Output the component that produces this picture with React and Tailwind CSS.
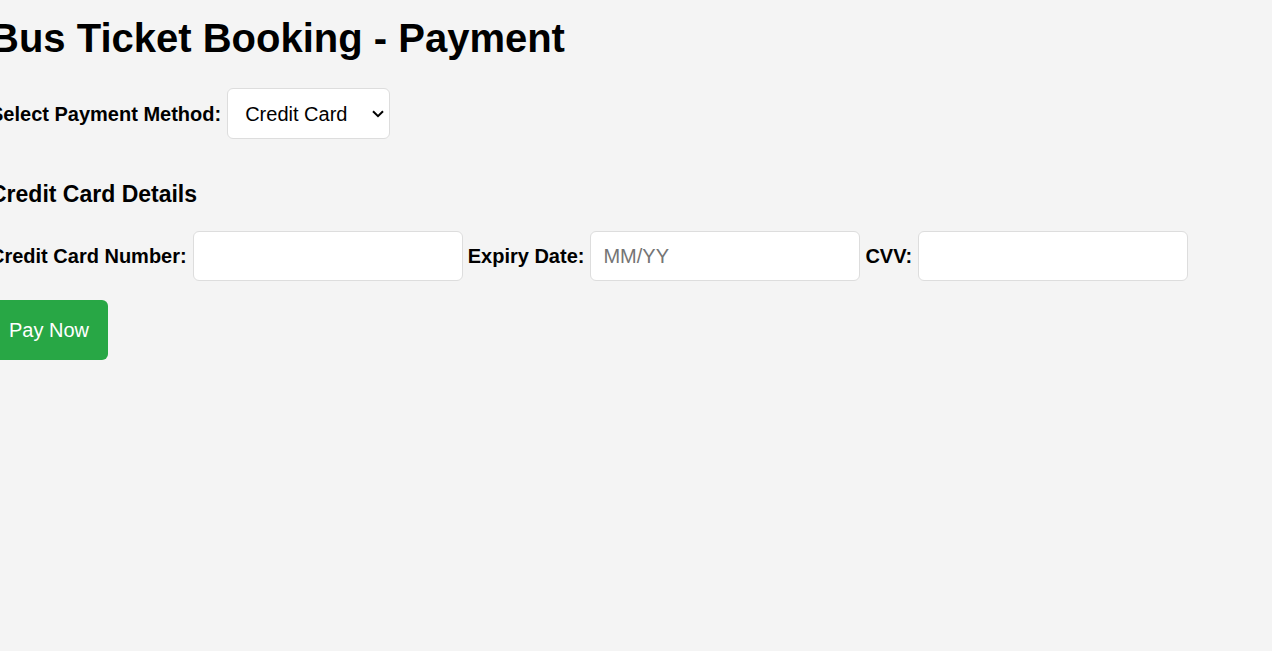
import React, { useState } from "react";

const field =
  "rounded-md border border-[#dddddd] bg-white text-[20px] text-black placeholder:text-[#757575]";
const label = "text-[20px] font-bold whitespace-nowrap";

function Field({ id, text, placeholder }) {
  return (
    <div className="flex items-center gap-1.5">
      <label htmlFor={id} className={label}>{text}</label>
      <input id={id} type="text" placeholder={placeholder} className={`${field} h-[50px] w-[270px] px-3`} />
    </div>
  );
}

export default function App() {
  const [method, setMethod] = useState("credit");
  return (
    <div className="min-h-screen overflow-x-hidden bg-[#f4f4f4] font-['Liberation_Sans',Arial,sans-serif] text-black">
      <main className="-ml-2.5 pt-4">
        <h1 className="text-[40px] leading-[44px] font-bold">Bus Ticket Booking - Payment</h1>
        <form onSubmit={(e) => e.preventDefault()}>
          <div className="mt-7 flex items-center gap-1.5">
            <label htmlFor="method" className={label}>Select Payment Method:</label>
            <div className="relative flex">
              <select
                id="method"
                value={method}
                onChange={(e) => setMethod(e.target.value)}
                className={`${field} h-[51px] w-[163px] appearance-none pr-3 pl-[17px]`}
              >
                <option value="credit">Credit Card</option>
                <option value="debit">Debit Card</option>
              </select>
              <svg className="pointer-events-none absolute top-[22px] right-1.5" width="12" height="8" viewBox="0 0 12 8" fill="none" stroke="black" strokeWidth="2">
                <path d="M1 1.2 6 6.2 11 1.2" />
              </svg>
            </div>
          </div>
          <h2 className="mt-10 text-[23px] leading-[30px] font-bold">Credit Card Details</h2>
          <div className="mt-[22px] flex items-center gap-[5px]">
            <Field id="number" text="Credit Card Number:" />
            <Field id="expiry" text="Expiry Date:" placeholder="MM/YY" />
            <Field id="cvv" text="CVV:" />
          </div>
          <button type="submit" className="mt-[19px] h-[60px] rounded-md bg-[#28a745] px-[19px] text-[20px] text-white">
            Pay Now
          </button>
        </form>
      </main>
    </div>
  );
}
